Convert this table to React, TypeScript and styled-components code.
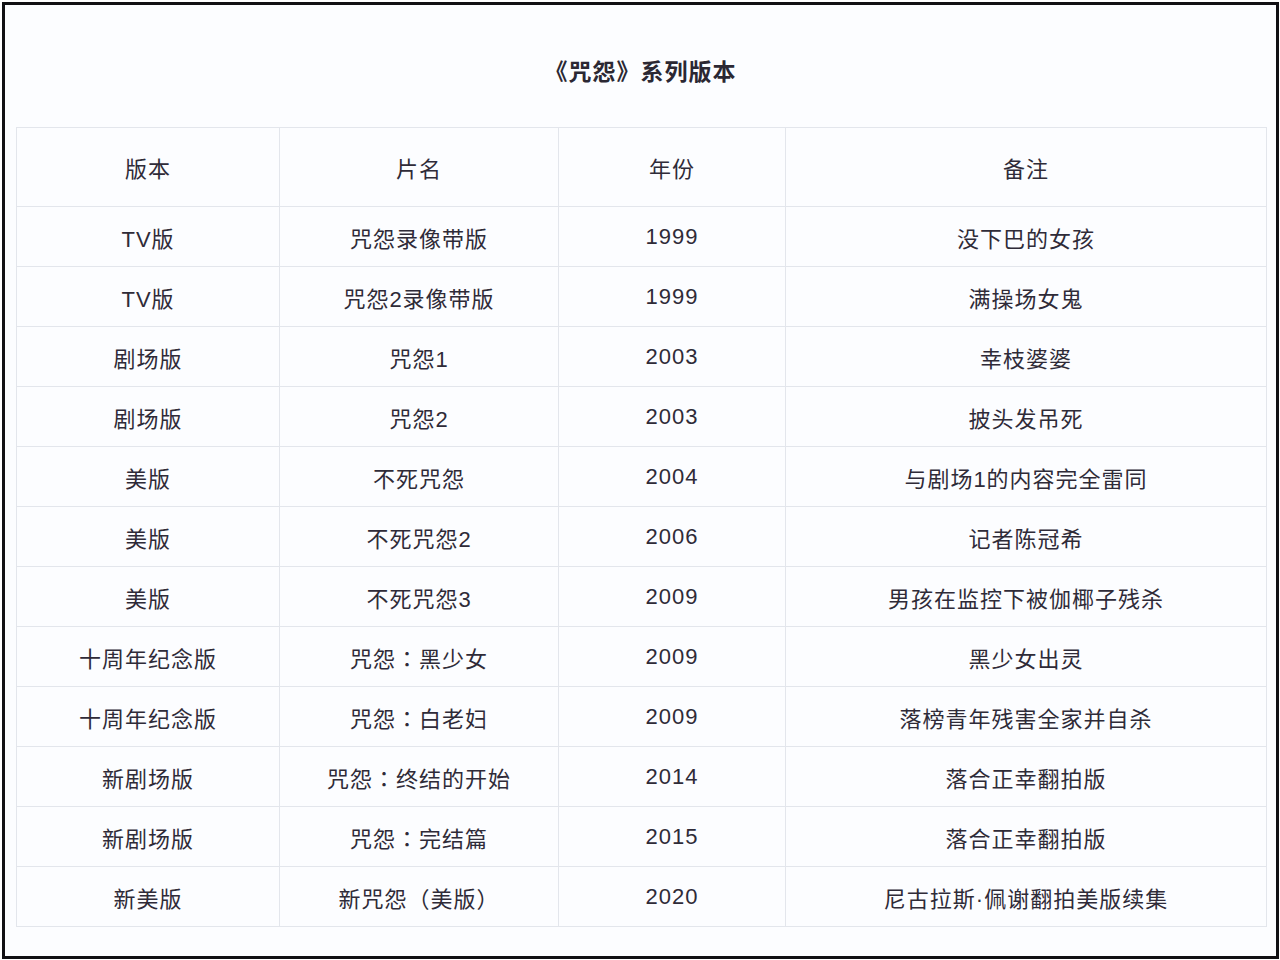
import React from 'react';
import styled, { createGlobalStyle } from 'styled-components';

const Global = createGlobalStyle`
  html, body {
    margin: 0;
    padding: 0;
    background: #ffffff;
  }
  body {
    font-family: 'Liberation Sans', 'Noto Sans CJK SC', sans-serif;
  }
`;

const Frame = styled.div`
  box-sizing: border-box;
  width: 1277px;
  height: 957px;
  margin: 2px 0 0 2px;
  border: 3px solid #111013;
  background: #fcfdff;
  padding: 0 11px 0 11px;
  display: flex;
  flex-direction: column;
`;

const Title = styled.h1`
  margin: 0;
  height: 122px;
  display: flex;
  align-items: center;
  justify-content: center;
  padding-top: 8px;
  box-sizing: border-box;
  color: #2b2833;
  font-size: 23px;
  font-weight: 700;
  letter-spacing: 1px;
`;

const Table = styled.table`
  width: 1250px;
  border-collapse: collapse;
  table-layout: fixed;
  color: #2f2b38;
  font-size: 22px;
  letter-spacing: 1px;
`;

const HeadCell = styled.th`
  height: 78px;
  border: 1px solid #e3e6ec;
  font-weight: 400;
  text-align: center;
  vertical-align: middle;
  padding: 0;
`;

const Cell = styled.td`
  height: 59px;
  border: 1px solid #e3e6ec;
  text-align: center;
  vertical-align: middle;
  padding: 0;
`;

const Punct = styled.span`
  font-family: 'Noto Sans CJK JP', 'Noto Sans CJK SC', sans-serif;
`;

const columns = [
  { label: '版本', width: 263 },
  { label: '片名', width: 279 },
  { label: '年份', width: 227 },
  { label: '备注', width: 481 },
];

const rows: [string, string, string, string][] = [
  ['TV版', '咒怨录像带版', '1999', '没下巴的女孩'],
  ['TV版', '咒怨2录像带版', '1999', '满操场女鬼'],
  ['剧场版', '咒怨1', '2003', '幸枝婆婆'],
  ['剧场版', '咒怨2', '2003', '披头发吊死'],
  ['美版', '不死咒怨', '2004', '与剧场1的内容完全雷同'],
  ['美版', '不死咒怨2', '2006', '记者陈冠希'],
  ['美版', '不死咒怨3', '2009', '男孩在监控下被伽椰子残杀'],
  ['十周年纪念版', '咒怨：黑少女', '2009', '黑少女出灵'],
  ['十周年纪念版', '咒怨：白老妇', '2009', '落榜青年残害全家并自杀'],
  ['新剧场版', '咒怨：终结的开始', '2014', '落合正幸翻拍版'],
  ['新剧场版', '咒怨：完结篇', '2015', '落合正幸翻拍版'],
  ['新美版', '新咒怨（美版）', '2020', '尼古拉斯·佩谢翻拍美版续集'],
];

// full-width punctuation sits centred in the reference, as in the JP font
const renderText = (text: string) =>
  text.split(/([：（）])/).map((part, i) =>
    /^[：（）]$/.test(part) ? <Punct key={i}>{part}</Punct> : part
  );

export default function App() {
  return (
    <>
      <Global />
      <Frame>
        <Title>《咒怨》系列版本</Title>
        <Table>
          <colgroup>
            {columns.map((c) => (
              <col key={c.label} style={{ width: c.width }} />
            ))}
          </colgroup>
          <thead>
            <tr>
              {columns.map((c) => (
                <HeadCell key={c.label}>{c.label}</HeadCell>
              ))}
            </tr>
          </thead>
          <tbody>
            {rows.map((r, i) => (
              <tr key={i}>
                {r.map((v, j) => (
                  <Cell key={j}>{renderText(v)}</Cell>
                ))}
              </tr>
            ))}
          </tbody>
        </Table>
      </Frame>
    </>
  );
}
